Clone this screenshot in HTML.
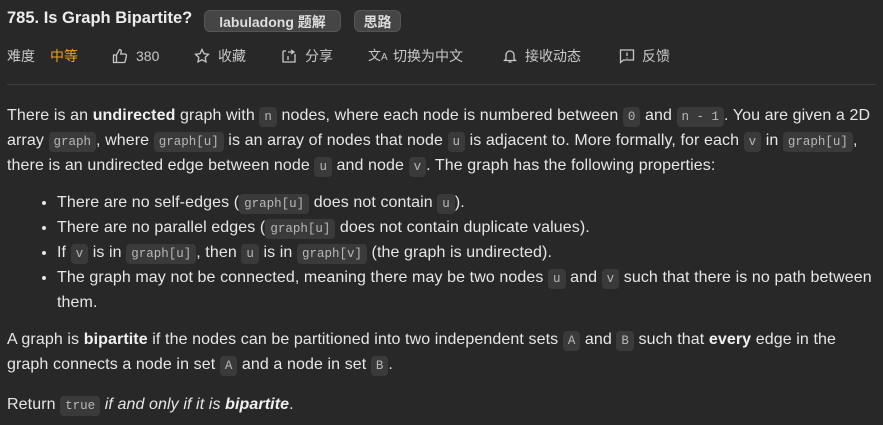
<!DOCTYPE html>
<html><head><meta charset="utf-8"><style>
html,body{margin:0;padding:0;background:#282828;width:883px;height:425px;overflow:hidden}
body{font-family:"Liberation Sans","Noto Sans CJK SC",sans-serif;color:#e3e3e3;position:relative}
.t{position:absolute;white-space:nowrap}
.title{left:7px;top:9px;font-size:16.5px;font-weight:bold;color:#ececec}
.badge{position:absolute;top:10px;height:22px;line-height:22px;background:#454545;border:1px solid #555;border-radius:6px;color:#ddd;font-size:14px;font-weight:bold;text-align:center;box-sizing:border-box}
.meta{top:47px;font-size:14px;color:#c8c8c8;line-height:18px}
.ic{position:absolute;top:48px}
hr{position:absolute;left:7px;top:84px;width:869px;margin:0;border:0;border-top:1px solid #3e3e3e}
.c{position:absolute;left:7px;right:8px;font-size:16px;line-height:24px;color:#e6e6e6;letter-spacing:0.1px}
p{margin:0}
code{font-family:"Liberation Mono",monospace;font-size:12.5px;color:#b8b8b8;background:#3a3a3a;border-radius:4px;padding:3px 5px;letter-spacing:0}
ul{margin:0;padding-left:50px}
b{color:#f0f0f0}
</style></head><body>
<div class="t title">785. Is Graph Bipartite?</div>
<div class="badge" style="left:204px;width:137px">labuladong 题解</div>
<div class="badge" style="left:354px;width:47px">思路</div>

<div class="t meta" style="left:7px">难度</div>
<div class="t meta" style="left:50px;color:#f0a020">中等</div>
<svg class="ic" style="left:112px" width="16" height="16" viewBox="0 0 16 16" fill="none" stroke="#c8c8c8" stroke-width="1.3"><path d="M1.5 7h3v7.5h-3zM4.5 7l3-5.5c1.3 0 2 1 1.7 2.3L8.7 6H13c1 0 1.6.9 1.4 1.8l-1.2 5.5c-.2.8-.8 1.2-1.5 1.2H4.5"/></svg>
<div class="t meta" style="left:136px">380</div>
<svg class="ic" style="left:194px" width="16" height="16" viewBox="0 0 16 16" fill="none" stroke="#c8c8c8" stroke-width="1.3"><path d="M8 1.5l2 4.2 4.5.6-3.3 3.1.8 4.5L8 11.7l-4 2.2.8-4.5L1.5 6.3 6 5.7z"/></svg>
<div class="t meta" style="left:218px">收藏</div>
<svg class="ic" style="left:281px" width="16" height="16" viewBox="0 0 16 16" fill="none" stroke="#c8c8c8" stroke-width="1.3"><path d="M2 3v11h12V6M2 3h3M7 4h6M10 2l3 2-3 2M7 8v4"/></svg>
<div class="t meta" style="left:305px">分享</div>
<div class="t meta" style="left:368px;font-size:13px">文<span style="font-size:10px">A</span></div>
<div class="t meta" style="left:393px">切换为中文</div>
<svg class="ic" style="left:503px" width="14" height="16" viewBox="0 0 14 16" fill="none" stroke="#c8c8c8" stroke-width="1.3"><path d="M3 11V7a4 4 0 018 0v4l1.5 1.5h-11zM5.5 14h3"/></svg>
<div class="t meta" style="left:525px">接收动态</div>
<svg class="ic" style="left:619px" width="16" height="16" viewBox="0 0 16 16" fill="none" stroke="#c8c8c8" stroke-width="1.3"><path d="M1.5 2h13v10H4.5l-3 2.5zM8 4.5v3.5M8 9.5v1"/></svg>
<div class="t meta" style="left:642px">反馈</div>
<hr>

<div class="c" style="top:104px">
<p>There is an <b>undirected</b> graph with <code>n</code> nodes, where each node is numbered between <code>0</code> and <code>n - 1</code>. You are given a 2D array <code>graph</code>, where <code>graph[u]</code> is an array of nodes that node <code>u</code> is adjacent to. More formally, for each <code>v</code> in <code>graph[u]</code>, there is an undirected edge between node <code>u</code> and node <code>v</code>. The graph has the following properties:</p>
</div>
<div class="c" style="top:191px">
<ul>
<li>There are no self-edges (<code>graph[u]</code> does not contain <code>u</code>).</li>
<li>There are no parallel edges (<code>graph[u]</code> does not contain duplicate values).</li>
<li>If <code>v</code> is in <code>graph[u]</code>, then <code>u</code> is in <code>graph[v]</code> (the graph is undirected).</li>
<li>The graph may not be connected, meaning there may be two nodes <code>u</code> and <code>v</code> such that there is no path between them.</li>
</ul>
</div>
<div class="c" style="top:328px">
<p>A graph is <b>bipartite</b> if the nodes can be partitioned into two independent sets <code>A</code> and <code>B</code> such that <b>every</b> edge in the graph connects a node in set <code>A</code> and a node in set <code>B</code>.</p>
</div>
<div class="c" style="top:393px">
<p>Return <code>true</code> <i>if and only if it is <b>bipartite</b></i>.</p>
</div>
</body></html>
